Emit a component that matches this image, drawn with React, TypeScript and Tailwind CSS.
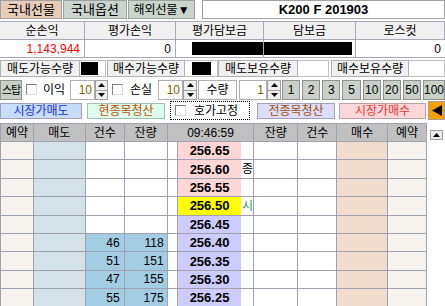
import React from "react";

type Row = {
  price: string;
  tone: string;
  mark?: string;
  markColor?: string;
  cnt?: string;
  qty?: string;
};

const rows: Row[] = [
  { price: "256.65", tone: "bg-[#ffd6d6]" },
  { price: "256.60", tone: "bg-[#ffd6d6]", mark: "종", markColor: "text-black" },
  { price: "256.55", tone: "bg-[#ffd6d6]" },
  { price: "256.50", tone: "bg-[#ffff00]", mark: "시", markColor: "text-[#1ca040]" },
  { price: "256.45", tone: "bg-[#ccccff]" },
  { price: "256.40", tone: "bg-[#ccccff]", cnt: "46", qty: "118" },
  { price: "256.35", tone: "bg-[#ccccff]", cnt: "51", qty: "151" },
  { price: "256.30", tone: "bg-[#ccccff]", cnt: "47", qty: "155" },
  { price: "256.25", tone: "bg-[#ccccff]", cnt: "55", qty: "175" },
];

function Check() {
  return (
    <span className="inline-block w-[11px] h-[11px] shrink-0 bg-white border border-t-[#808080] border-l-[#808080] border-b-[#d8d8d8] border-r-[#d8d8d8]" />
  );
}

function Spin({ value, box, arrows }: { value: string; box: string; arrows: string }) {
  return (
    <div className="flex h-full">
      <div className={`${box} flex items-center justify-end pr-[2px] bg-white border border-[#b0b0b0] text-[#806000] text-[12px]`}>
        {value}
      </div>
      <div className={`${arrows} flex flex-col`}>
        <div className="flex-1 flex items-center justify-center bg-[#f0f0f0] border border-[#a0a0a0]">
          <svg width="7" height="4" viewBox="0 0 7 4">
            <polygon points="3.5,0 7,4 0,4" fill="#000" />
          </svg>
        </div>
        <div className="flex-1 flex items-center justify-center bg-[#f0f0f0] border border-t-0 border-[#a0a0a0]">
          <svg width="7" height="4" viewBox="0 0 7 4">
            <polygon points="0,0 7,0 3.5,4" fill="#000" />
          </svg>
        </div>
      </div>
    </div>
  );
}

const quick = ["1", "2", "3", "5", "10", "20", "50", "100"];

export default function App() {
  return (
    <div className="w-[445px] h-[306px] overflow-hidden bg-white text-black leading-none font-['Liberation_Sans','Noto_Sans_CJK_KR',sans-serif]">
      {/* tabs */}
      <div className="flex items-start h-[21px] text-[12px]">
        <div className="w-[62px] h-[19px] flex items-center justify-center bg-[#e8ccb8] border border-[#a0a0a0] text-[13px]">국내선물</div>
        <div className="ml-[1px] w-[64px] h-[19px] flex items-center justify-center bg-[#c8d4cc] border border-[#a0a0a0] text-[13px]">국내옵션</div>
        <div className="ml-[1px] w-[67px] h-[19px] flex items-center justify-center bg-[#c8d4cc] border border-[#a0a0a0]">해외선물▼</div>
        <div className="ml-[7px] flex-1 h-[19px] flex items-center justify-center bg-white border border-[#a0a0a0] font-bold text-[13px]">
          K200 F 201903
        </div>
      </div>

      {/* summary */}
      <div className="border-t border-[#a8a8b8] text-[12px]">
        <div className="flex h-[18px]">
          {[
            ["순손익", "w-[85px]"],
            ["평가손익", "w-[91px]"],
            ["평가담보금", "w-[88px]"],
            ["담보금", "w-[92px]"],
            ["로스컷", "w-[89px]"],
          ].map(([t, w]) => (
            <div key={t} className={`${w} flex items-center justify-center bg-[#f0f0f0] border-r border-b border-[#a8a8b8]`}>
              {t}
            </div>
          ))}
        </div>
        <div className="flex h-[18px] border-b border-[#a8a8b8]">
          <div className="w-[85px] flex items-center justify-end pr-[4px] text-[#ff0000] border-r border-[#a8a8b8]">1,143,944</div>
          <div className="w-[91px] flex items-center justify-end pr-[4px] border-r border-[#a8a8b8]">0</div>
          <div className="w-[88px] flex py-[2px] pl-[16px] border-r border-[#a8a8b8]">
            <div className="flex-1 bg-black" />
          </div>
          <div className="w-[92px] flex py-[2px] pr-[3px] border-r border-[#a8a8b8]">
            <div className="flex-1 bg-black" />
          </div>
          <div className="w-[89px] flex items-center justify-end pr-[4px]">0</div>
        </div>
      </div>

      {/* quantities */}
      <div className="mt-[2px] flex h-[17px] text-[12px]">
        <div className="w-[80px] flex items-center justify-center bg-[#f0f0f0] border border-[#b0b0b0]">매도가능수량</div>
        <div className="w-[26px] flex py-[1px] pl-[1px] pr-[7px] border border-l-0 border-[#c0c0c0]">
          <div className="flex-1 bg-black" />
        </div>
        <div className="ml-[1px] w-[78px] flex items-center justify-center bg-[#f0f0f0] border border-[#b0b0b0]">매수가능수량</div>
        <div className="w-[33px] flex py-[1px] pl-[7px] pr-[6px] border border-l-0 border-[#c0c0c0]">
          <div className="flex-1 bg-black" />
        </div>
        <div className="w-[80px] flex items-center justify-center bg-[#f0f0f0] border border-[#b0b0b0]">매도보유수량</div>
        <div className="w-[31px] bg-white border border-l-0 border-[#c0c0c0]" />
        <div className="ml-[2px] w-[78px] flex items-center justify-center bg-[#f0f0f0] border border-[#b0b0b0]">매수보유수량</div>
        <div className="flex-1 bg-white border border-l-0 border-[#c0c0c0]" />
      </div>

      {/* stop row */}
      <div className="mt-[3px] flex items-center h-[20px] text-[12px]">
        <div className="w-[22px] h-full flex items-center justify-center bg-[#c8d0c8] border border-[#909090] text-[11px] tracking-[-1px] whitespace-nowrap">
          스탑
        </div>
        <div className="ml-[4px]"><Check /></div>
        <span className="ml-[6px] w-[27px]">이익</span>
        <Spin value="10" box="w-[25px]" arrows="w-[13px]" />
        <div className="ml-[4px]"><Check /></div>
        <span className="ml-[7px] w-[28px]">손실</span>
        <Spin value="10" box="w-[25px]" arrows="w-[14px]" />
        <div className="ml-[1px] w-[39px] h-full flex items-center justify-center bg-white border border-[#b0b0b0]">수량</div>
        <div className="ml-[2px] h-full">
          <Spin value="1" box="w-[28px]" arrows="w-[14px]" />
        </div>
        <div className="ml-[1px] flex-1 h-full flex gap-[2px]">
          {quick.map((q) => (
            <div key={q} className="flex-1 flex items-center justify-center bg-[#c8d0c8] border border-[#909090]">
              {q}
            </div>
          ))}
        </div>
      </div>

      {/* order buttons */}
      <div className="mt-[1px] flex items-center h-[19px] text-[12px]">
        <div className="w-[82px] h-[16px] flex items-center justify-center bg-[#c8dcfc] text-[#1030ff] border border-[#a0a0c0]">시장가매도</div>
        <div className="ml-[5px] w-[78px] h-[16px] flex items-center justify-center bg-[#dcfcec] text-[#c05000] border border-[#a0c0b0]">현종목청산</div>
        <div className="ml-[5px] w-[80px] h-[19px] flex items-center pl-[4px] gap-[8px] border border-dotted border-black">
          <Check />
          <span>호가고정</span>
        </div>
        <div className="ml-[7px] w-[78px] h-[16px] flex items-center justify-center bg-[#dcdcfc] text-[#a05000] border border-[#a0a0c0]">전종목청산</div>
        <div className="ml-[4px] w-[87px] h-[16px] flex items-center justify-center bg-[#fcd8d8] text-[#f03030] border border-[#c0a0a0]">시장가매수</div>
        <div className="ml-[2px] flex-1 h-[19px] flex items-center justify-center bg-[#f8a000] border border-[#a0a0a0]">
          <svg width="10" height="11" viewBox="0 0 10 11">
            <polygon points="10,0 10,11 0,5.5" fill="#000" />
          </svg>
        </div>
      </div>

      {/* order book */}
      <div className="mt-[3px] flex">
        <div className="w-[427px] border-t border-l border-[#a0a0b0] text-[12px]">
          <div className="flex h-[18px] bg-[#c0c0c0] border-b border-[#a0a0b0]">
            {[
              ["예약", "w-[33px]"],
              ["매도", "w-[52px]"],
              ["건수", "w-[39px]"],
              ["잔량", "w-[43px]"],
              ["09:46:59", "w-[87px]"],
              ["잔량", "w-[44px]"],
              ["건수", "w-[39px]"],
              ["매수", "w-[51px]"],
              ["예약", "w-[39px]"],
            ].map(([t, w], i) => (
              <div key={i} className={`${w} flex items-center justify-center border-r border-[#a0a0b0]`}>
                {t}
              </div>
            ))}
          </div>
          {rows.map((r) => (
            <div key={r.price} className="flex h-[18.4px] border-b border-[#a0a0b0]">
              <div className="w-[33px] bg-[#f6f2ee] border-r border-[#a0a0b0]" />
              <div className="w-[52px] bg-[#d2e2e8] border-r border-[#a0a0b0]" />
              <div className={`w-[39px] flex items-center justify-end pr-[4px] border-r border-[#a0a0b0] ${r.cnt ? "bg-[#a2cce2]" : "bg-white"}`}>
                {r.cnt}
              </div>
              <div className={`w-[43px] flex items-center justify-end pr-[3px] border-r border-[#a0a0b0] ${r.qty ? "bg-[#a2cce2]" : "bg-white"}`}>
                {r.qty}
              </div>
              <div className="w-[10px] bg-white border-r border-[#a0a0b0]" />
              <div className={`w-[64px] flex items-center justify-center font-bold text-[13px] ${r.tone}`}>{r.price}</div>
              <div className={`w-[13px] flex items-center justify-center bg-white border-r border-[#a0a0b0] ${r.markColor ?? ""}`}>
                {r.mark}
              </div>
              <div className="w-[44px] bg-white border-r border-[#a0a0b0]" />
              <div className="w-[39px] bg-white border-r border-[#a0a0b0]" />
              <div className="w-[51px] bg-[#f0dccc] border-r border-[#a0a0b0]" />
              <div className="w-[39px] bg-[#f6f2ee] border-r border-[#a0a0b0]" />
            </div>
          ))}
        </div>
        <div className="w-[18px] pt-[7px] pl-[3px] bg-white">
          <div className="w-[13px] h-[10px] flex items-center justify-center bg-[#ececec] border border-[#a0a0a0]">
            <svg width="7" height="4" viewBox="0 0 7 4">
              <polygon points="3.5,0 7,4 0,4" fill="#000" />
            </svg>
          </div>
        </div>
      </div>
    </div>
  );
}
